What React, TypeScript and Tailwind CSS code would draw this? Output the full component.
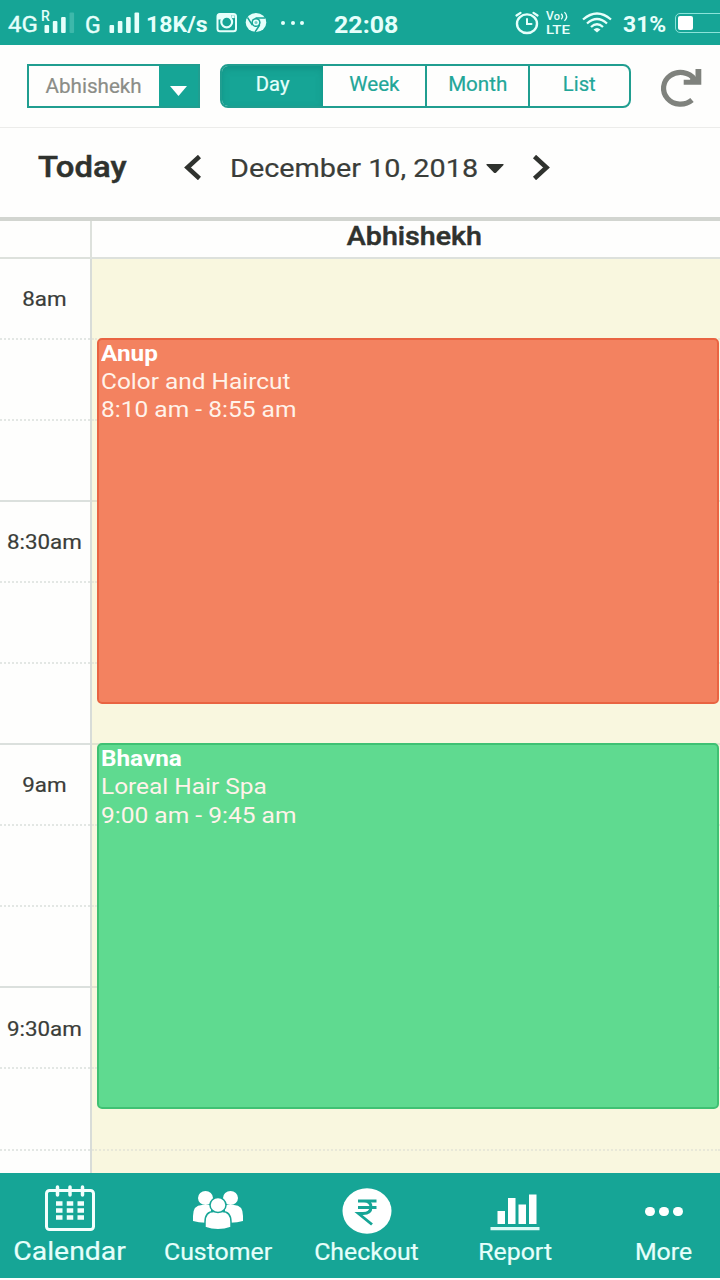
import type { ReactNode } from "react";

const TIME_ROWS = [
  { label: "8am", major: false },
  { label: "", major: false },
  { label: "", major: true },
  { label: "8:30am", major: false },
  { label: "", major: false },
  { label: "", major: true },
  { label: "9am", major: false },
  { label: "", major: false },
  { label: "", major: true },
  { label: "9:30am", major: false },
  { label: "", major: false },
  { label: "", major: false },
];

function Signal({ last }: { last: string }) {
  return (
    <svg className="block h-[22px] w-[32px]" viewBox="0 0 32 22" fill="#e6fffb">
      <rect x="0.500" y="13" width="4.600" height="8" rx="1" />
      <rect x="8.800" y="9" width="4.600" height="12" rx="1" />
      <rect x="17.100" y="5" width="4.600" height="16" rx="1" />
      <rect x="25.500" y="0.500" width="4.600" height="20.500" rx="1" fill={last} />
    </svg>
  );
}

function StatusBar() {
  return (
    <header className="flex h-[45px] shrink-0 items-start overflow-hidden bg-[#16a596] text-[#e6fffb]">
      <div className="flex h-[46px] w-[36px] shrink-0 items-center pl-[8px] pt-[4px] text-[22px] leading-none [-webkit-text-stroke:0.400px_#e6fffb]">
        <span className="origin-left scale-x-[1.09]">4G</span>
      </div>
      <div className="relative mt-[12px] ml-[8px] w-[32px] shrink-0">
        <Signal last="#3db8aa" />
        <span className="absolute -top-[3px] -left-[3px] text-[14px] font-medium leading-none">R</span>
      </div>
      <div className="flex h-[46px] w-[33px] shrink-0 items-center pt-[4px] pl-[9px] text-[23px] leading-none [-webkit-text-stroke:0.400px_#e6fffb]">G</div>
      <div className="mt-[12px] w-[32px] shrink-0">
        <Signal last="#e6fffb" />
      </div>
      <div className="flex h-[46px] w-[75px] shrink-0 items-center pt-[3px] pl-[5px] text-[22px] font-bold leading-none">
        <span className="origin-left scale-x-[1.05]">18K/s</span>
      </div>
      <svg className="mt-[12px] h-[22px] w-[22px] shrink-0" viewBox="0 0 22 22" fill="none" stroke="#e6fffb">
        <rect x="1.500" y="2" width="18.500" height="17.200" rx="2.500" strokeWidth="2" />
        <path d="M1.500 7.500V4q0-2.500 2-2.500h12V7.500z" fill="#e6fffb" stroke="none" />
        <rect x="15.700" y="3.200" width="2.900" height="2.900" fill="#e6fffb" stroke="none" />
        <circle cx="10.700" cy="10" r="5.400" strokeWidth="2.200" fill="#16a596" />
      </svg>
      <svg className="mt-[12px] ml-[7px] h-[22px] w-[22px] shrink-0" viewBox="0 0 22 22">
        <ellipse cx="11" cy="10.500" rx="10.300" ry="9.500" fill="#e6fffb" />
        <circle cx="11" cy="10.500" r="4.600" fill="#16a596" />
        <path d="M10.500 6H20M7.300 13 2.500 5.500M14.700 13 10 20" stroke="#16a596" strokeWidth="1.400" fill="none" />
        <circle cx="11" cy="10.500" r="3.100" fill="#e6fffb" />
        <circle cx="11" cy="10.500" r="1.500" fill="#6fcfc5" />
      </svg>
      <div className="mt-[21px] ml-[14px] flex w-[23px] shrink-0 justify-between">
        <i className="size-[4px] rounded-full bg-[#e6fffb]" />
        <i className="size-[4px] rounded-full bg-[#e6fffb]" />
        <i className="size-[4px] rounded-full bg-[#e6fffb]" />
      </div>
      <div className="flex h-[46px] w-[211px] shrink-0 items-center pt-[3px] pl-[30px] text-[24px] font-bold leading-none">
        <span className="origin-left scale-x-[1.04]">22:08</span>
      </div>
      <svg className="mt-[11px] h-[24px] w-[24px] shrink-0" viewBox="0 0 24 24" fill="none" stroke="#e6fffb" strokeLinecap="round">
        <ellipse cx="12" cy="12.700" rx="10" ry="9.300" strokeWidth="2.400" />
        <path d="M12 8v5h4.500" strokeWidth="2" />
        <path d="M1.500 4.500 5.500 1.800M22.500 4.500 18.500 1.800" strokeWidth="2.200" />
      </svg>
      <div className="mt-[10px] ml-[7px] flex w-[27px] shrink-0 flex-col font-medium">
        <span className="flex h-[12px] items-center text-[12px] leading-[12px]">
          <span>V</span>
          <span className="text-[11px] leading-[11px]">o</span>
          <svg className="h-[11px] w-[10px]" viewBox="0 0 9 10" fill="none" stroke="#e6fffb" strokeWidth="1.200">
            <path d="M1 2.500q2.500 2.500 0 5M4 1q4 4 0 8" />
          </svg>
        </span>
        <span className="mt-[1px] origin-left scale-x-[1.12] text-[13.500px] leading-[13px]">LTE</span>
      </div>
      <svg className="mt-[12px] ml-[9px] h-[22px] w-[30px] shrink-0" viewBox="0 0 30 22" fill="none" stroke="#e6fffb" strokeWidth="2.300">
        <path d="M1 7.500Q15-4.500 29 7.500" />
        <path d="M5 11.500Q15 2.500 25 11.500" />
        <path d="M9 15Q15 9.500 21 15" />
        <path d="M11.500 17.500q3.500-3 7 0L15 20.500z" fill="#e6fffb" stroke="none" />
      </svg>
      <div className="flex h-[46px] w-[63px] shrink-0 items-center pt-[3px] pl-[11px] text-[22px] font-bold leading-none">
        <span className="origin-left scale-x-[1.04]">31%</span>
      </div>
      <div className="mt-[13px] h-[20px] w-[60px] shrink-0 rounded-[5px] border border-[#8be3d9] p-[2px]">
        <div className="h-[14px] w-[15px] rounded-[2px] bg-white" />
      </div>
    </header>
  );
}

function Toolbar() {
  return (
    <div className="flex h-[83px] shrink-0 items-start border-b border-[#ececea] pt-[19px] pl-[26.500px]">
      <div className="flex h-[44px] w-[173px] shrink-0 border-2 border-[#209e90]">
        <div className="flex flex-1 justify-center pt-[8px] text-[20px] leading-[25px] text-[#8b8d87] [-webkit-text-stroke:0.200px_#8b8d87]">
          <span className="scale-x-[1.03]">Abhishekh</span>
        </div>
        <div className="flex w-[39px] items-center justify-center bg-[#16a596] pt-[9px]">
          <svg className="h-[10px] w-[17px]" viewBox="0 0 17 10" fill="#fff">
            <path d="M0 0h17L8.500 10z" />
          </svg>
        </div>
      </div>
      <div className="ml-[20.500px] flex h-[44px] w-[411px] shrink-0 overflow-hidden rounded-[8px] border-2 border-[#209e90] text-[20px] leading-[24px] text-[#22a698] [-webkit-text-stroke:0.200px_#22a698]">
        <div className="flex w-[101px] shrink-0 justify-center bg-[#16a596] pt-[6px] text-[#e6fffb] shadow-[inset_0_3px_7px_rgba(0,100,90,0.25)] [-webkit-text-stroke:0.200px_#e6fffb]">
          <span className="scale-x-[1.01]">Day</span>
        </div>
        <div className="flex w-[102px] shrink-0 justify-center pt-[6px]">
          <span className="scale-x-[1.03]">Week</span>
        </div>
        <div className="flex w-[105px] shrink-0 justify-center border-x-2 border-[#209e90] pt-[6px]">
          <span className="scale-x-[1.03]">Month</span>
        </div>
        <div className="flex flex-1 justify-center pt-[6px]">
          <span className="scale-x-[1.01]">List</span>
        </div>
      </div>
      <svg className="mt-[4px] ml-[29px] h-[40px] w-[42px] shrink-0" viewBox="0 0 42 40" fill="none" stroke="#7f827d">
        <path d="M34.500 11.200A17 15.900 0 1 0 32 32" strokeWidth="5.200" />
        <path d="M35.500 1H41.300V16.800H23.700V11.800H30L32 6.500L35.500 9.500z" fill="#7f827d" stroke="none" />
      </svg>
    </div>
  );
}

function DateBar() {
  return (
    <div className="flex h-[89px] shrink-0 items-start text-[#2f322e]">
      <div className="mt-[21px] w-[184px] pl-[38px] text-[30px] font-medium leading-[36px]">
        <span className="inline-block origin-left scale-x-[1.095] [-webkit-text-stroke:0.500px_#2f322e]">Today</span>
      </div>
      <svg className="mt-[27px] h-[25px] w-[17px]" viewBox="0 0 17 25" fill="none" stroke="#2f322e" strokeWidth="4.600">
        <path d="M15.500 1.500 3.500 12.500 15.500 23.500" />
      </svg>
      <div className="mt-[23px] w-[285px] pl-[29px] text-[26.500px] leading-[34px] whitespace-nowrap text-[#3a3d39] [-webkit-text-stroke:0.200px_#3a3d39]">
        <span className="inline-block origin-left scale-x-[1.087]">December 10, 2018</span>
      </div>
      <svg className="mt-[36px] h-[10px] w-[18px]" viewBox="0 0 18 10" fill="#2f322e">
        <path d="M1 0h16q1 0 0.500 1L10 8.700q-1 0.800-2 0L0.500 1Q0 0 1 0z" />
      </svg>
      <svg className="mt-[27px] ml-[28px] h-[25px] w-[18px]" viewBox="0 0 18 25" fill="none" stroke="#2f322e" strokeWidth="4.600">
        <path d="M2.500 1.500 14.500 12.500 2.500 23.500" />
      </svg>
    </div>
  );
}

function Appointment({ name, service, time, tone }: { name: ReactNode; service: ReactNode; time: ReactNode; tone: string }) {
  return (
    <div className={`absolute left-[5px] h-[366px] w-[622px] rounded-[5px] border-2 pl-[2px] text-[22.500px] leading-[28.400px] ${tone}`}>
      <div className="-mt-[1px] font-bold text-white">{name}</div>
      <div className="text-[#fff3ea]">{service}</div>
      <div className="text-[#fff3ea]">{time}</div>
    </div>
  );
}

function Schedule() {
  return (
    <main className="flex h-[956px] flex-col overflow-hidden">
      <div className="flex h-[41.500px] shrink-0 border-t-4 border-b-2 border-t-[#d2d5d0] border-b-[#dde1dc]">
        <div className="w-[92px] border-r-2 border-[#dde1dc]" />
        <div className="flex flex-1 justify-center pl-[16px] text-[26px] leading-[30px] font-medium text-[#2f322e]">
          <span className="scale-x-[1.1] [-webkit-text-stroke:0.500px_#2f322e]">Abhishekh</span>
        </div>
      </div>
      <div className="flex">
        <div className="w-[92px] shrink-0 border-r-2 border-[#d8dcd8]">
          {TIME_ROWS.map((row, i) => (
            <div
              key={i}
              className={`flex h-[81.100px] items-center justify-center pt-[2px] pr-[2px] text-[20.500px] leading-none text-[#3a3d39] [-webkit-text-stroke:0.200px_#3a3d39] ${
                row.major ? "border-b-2 border-[#dbe0dd]" : "border-b-2 border-dotted border-[#e3e7e4]"
              }`}
            >
              <span className="scale-x-[1.09]">{row.label}</span>
            </div>
          ))}
        </div>
        <div className="relative flex-1 bg-[#f9f7df]">
          {TIME_ROWS.map((row, i) => (
            <div
              key={i}
              className={`h-[81.100px] ${
                row.major ? "border-b-2 border-[#e2e3d0]" : "border-b-2 border-dotted border-[#e8e8d8]"
              }`}
            />
          ))}
          <Appointment
            name={<span className="inline-block origin-left scale-x-[1.08]">Anup</span>}
            service={<span className="inline-block origin-left scale-x-[1.085]">Color and Haircut</span>}
            time={<span className="inline-block origin-left scale-x-[1.09]">8:10 am - 8:55 am</span>}
            tone="top-[79px] border-[#e96442] bg-[#f38260]"
          />
          <Appointment
            name={<span className="inline-block origin-left scale-x-[1.08]">Bhavna</span>}
            service={<span className="inline-block origin-left scale-x-[1.085]">Loreal Hair Spa</span>}
            time={<span className="inline-block origin-left scale-x-[1.09]">9:00 am - 9:45 am</span>}
            tone="top-[484.500px] border-[#3fc173] bg-[#5fda90]"
          />
        </div>
      </div>
    </main>
  );
}

function CalendarIcon() {
  return (
    <svg className="h-[48px] w-[50px]" viewBox="0 0 50 48" fill="none" stroke="#f4fffd">
      <rect x="1.500" y="5.500" width="47" height="39" rx="3" strokeWidth="3" />
      <path d="M12.500 2v8M25 2v8M37.500 2v8" strokeWidth="3.500" strokeLinecap="round" />
      <path d="M11 18.500h28M11 25.500h28M11 32.500h28" strokeWidth="4.600" strokeDasharray="6.500 4.250" />
    </svg>
  );
}

function CustomerIcon() {
  return (
    <svg className="h-[40px] w-[50px]" viewBox="0 0 50 40" fill="#fff">
      <ellipse cx="12.500" cy="7" rx="7.500" ry="7" />
      <ellipse cx="37.500" cy="7" rx="7.500" ry="7" />
      <path d="M0 30v-5q0-11 9-11h9v17.500q-10 1-18-1.500zM50 30v-5q0-11-9-11h-9v17.500q10 1 18-1.500z" />
      <g stroke="#16a596" strokeWidth="1.500">
        <path d="M12 36.500V31q0-10.500 9-10.500h8q9 0 9 10.500v5.500q-13 4.500-26 0z" />
        <ellipse cx="25" cy="14" rx="8" ry="7.500" />
      </g>
    </svg>
  );
}

function RupeeIcon() {
  return (
    <svg className="h-[46px] w-[50px]" viewBox="0 0 50 46">
      <ellipse cx="25" cy="23" rx="24.500" ry="22.800" fill="#fff" />
      <path d="M16 13h18.500M16 19.500h18.500M16 13h6q7 0 7 6.200T21 25.500h-4.500L30 36.500" fill="none" stroke="#16a596" strokeWidth="2.900" />
    </svg>
  );
}

function ReportIcon() {
  return (
    <svg className="h-[37px] w-[50px]" viewBox="0 0 50 37" fill="#fff">
      <path d="M7.500 17H15v13H7.500zM18 4h7.500v26H18zM28.500 10.500h7.500V30h-7.500zM39 0.500h7.500V30H39z" />
      <path d="M0.500 33h49v3.300h-49z" fill="#dcfbf6" />
    </svg>
  );
}

function BottomNav() {
  return (
    <nav className="flex h-[105px] shrink-0 bg-[#16a596] text-[23px] leading-[28px] text-[#e6fffb] [-webkit-text-stroke:0.200px_#e6fffb]">
      <div className="flex w-[140px] shrink-0 flex-col items-center pt-[12px]">
        <div className="flex h-[50px] items-start"><CalendarIcon /></div>
        <span className="scale-x-[1.09] text-[26px] leading-[32px]">Calendar</span>
      </div>
      <div className="flex w-[156px] shrink-0 flex-col items-center pt-[18px]">
        <div className="flex h-[48px] items-start"><CustomerIcon /></div>
        <span className="scale-x-[1.08]">Customer</span>
      </div>
      <div className="flex w-[141px] shrink-0 flex-col items-center pt-[15px]">
        <div className="flex h-[51px] items-start"><RupeeIcon /></div>
        <span className="scale-x-[1.08]">Checkout</span>
      </div>
      <div className="flex w-[156px] shrink-0 flex-col items-center pt-[21px]">
        <div className="flex h-[45px] items-start"><ReportIcon /></div>
        <span className="scale-x-[1.08]">Report</span>
      </div>
      <div className="flex w-[141px] shrink-0 flex-col items-center pt-[34px]">
        <div className="flex h-[32px] gap-[4px]">
          <i className="h-[9px] w-[10px] rounded-full bg-white" />
          <i className="h-[9px] w-[10px] rounded-full bg-white" />
          <i className="h-[9px] w-[10px] rounded-full bg-white" />
        </div>
        <span className="scale-x-[1.08]">More</span>
      </div>
    </nav>
  );
}

export default function App() {
  return (
    <div className="flex h-[1280px] w-[720px] flex-col overflow-hidden bg-[#fefefd] font-['Roboto',sans-serif]">
      <StatusBar />
      <Toolbar />
      <DateBar />
      <Schedule />
      <BottomNav />
    </div>
  );
}
